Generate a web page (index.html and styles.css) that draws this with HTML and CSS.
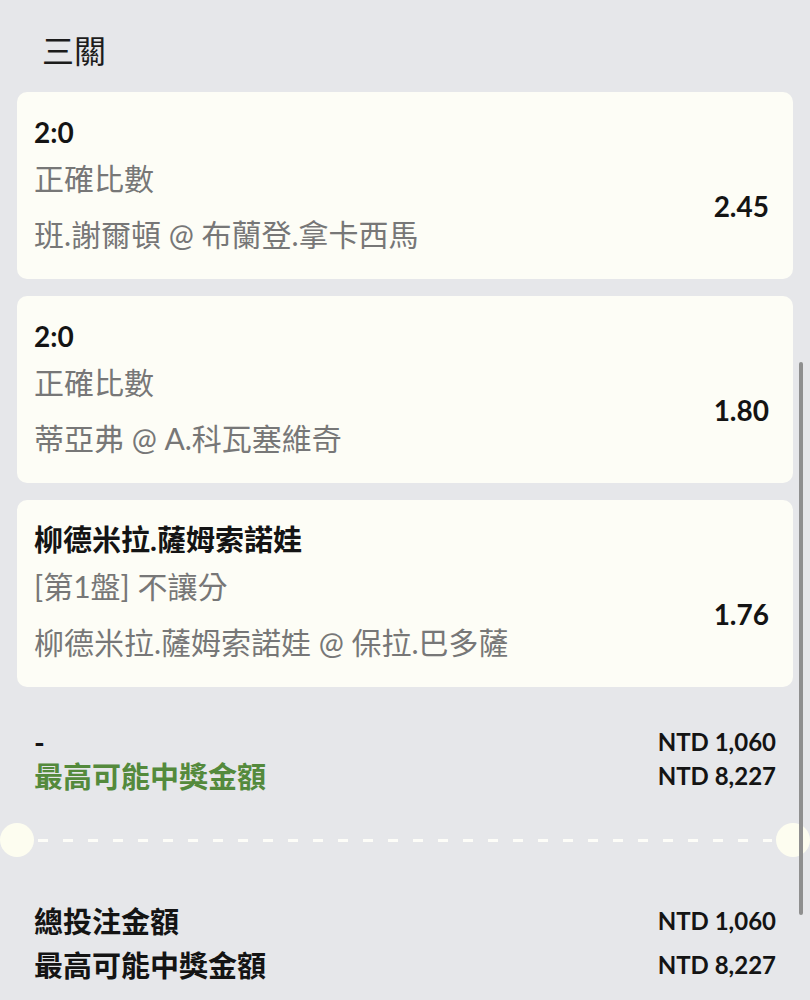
FILE: index.html
```html
<!DOCTYPE html>
<html lang="zh-Hant">
<head>
    <meta charset="UTF-8">
    <meta name="viewport" content="width=device-width, initial-scale=1.0">
    <title>三關</title>
    <link rel="stylesheet" href="styles.css">
</head>
<body>
    <div class="slip">
        <h2 class="slip-title">三關</h2>

        <div class="legs">
            <div class="leg">
                <div class="leg-pick">2:0</div>
                <div class="leg-body">
                    <div class="leg-info">
                        <div class="leg-market">正確比數</div>
                        <div class="leg-event">班.謝爾頓 @ 布蘭登.拿卡西馬</div>
                    </div>
                    <div class="leg-odds">2.45</div>
                </div>
            </div>
            <div class="leg">
                <div class="leg-pick">2:0</div>
                <div class="leg-body">
                    <div class="leg-info">
                        <div class="leg-market">正確比數</div>
                        <div class="leg-event">蒂亞弗 @ A.科瓦塞維奇</div>
                    </div>
                    <div class="leg-odds">1.80</div>
                </div>
            </div>
            <div class="leg">
                <div class="leg-pick name">柳德米拉.薩姆索諾娃</div>
                <div class="leg-body">
                    <div class="leg-info">
                        <div class="leg-market">[第1盤] 不讓分</div>
                        <div class="leg-event">柳德米拉.薩姆索諾娃 @ 保拉.巴多薩</div>
                    </div>
                    <div class="leg-odds">1.76</div>
                </div>
            </div>
        </div>

        <div class="summary">
            <div class="summary-row">
                <span class="summary-label">-</span>
                <span class="amount">NTD 1,060</span>
            </div>
            <div class="summary-row">
                <span class="summary-label green">最高可能中獎金額</span>
                <span class="amount">NTD 8,227</span>
            </div>
        </div>

        <div class="divider">
            <span class="notch"></span>
            <span class="dash-line"></span>
            <span class="notch"></span>
        </div>

        <div class="totals">
            <div class="total-row">
                <span>總投注金額</span>
                <span class="amount">NTD 1,060</span>
            </div>
            <div class="total-row">
                <span>最高可能中獎金額</span>
                <span class="amount">NTD 8,227</span>
            </div>
        </div>
    </div>

    <div class="scrollbar"></div>
</body>
</html>
```

FILE: styles.css
```css
* {
    box-sizing: border-box;
    margin: 0;
    padding: 0;
}

body {
    font-family: Lato, "Noto Sans CJK TC", sans-serif;
    background: #e6e7ea;
    color: #141414;
    height: 1000px;
    overflow: hidden;
    position: relative;
}

.slip {
    padding-top: 28px;
}

.slip-title {
    font-size: 32px;
    font-weight: 400;
    line-height: 46px;
    padding-left: 42px;
    margin-bottom: 18px;
    color: #1c1c1c;
}

.legs {
    display: flex;
    flex-direction: column;
    gap: 17px;
    padding: 0 17px;
}

.leg {
    background: #fdfdf6;
    border-radius: 10px;
    padding: 17px 24px 22px 17px;
}

.leg-pick {
    font-size: 28px;
    font-weight: 700;
    line-height: 46px;
}

.leg-pick.name {
    font-size: 29px;
}

.leg-body {
    display: flex;
    align-items: center;
    justify-content: space-between;
}

.leg-market,
.leg-event {
    font-size: 30px;
    line-height: 46px;
    color: #777;
}

.leg-event {
    margin-top: 10px;
}

.leg-odds {
    font-size: 28px;
    font-weight: 700;
}

.summary {
    padding: 37px 34px 0;
}

.summary-row,
.total-row {
    display: flex;
    justify-content: space-between;
    align-items: center;
    font-weight: 700;
}

.summary-row {
    height: 34px;
}

.summary-label {
    font-size: 29px;
}

.green {
    color: #548a3c;
}

.amount {
    font-size: 24px;
    font-weight: 700;
}

.divider {
    display: flex;
    align-items: center;
    height: 34px;
    margin-top: 31px;
}

.notch {
    width: 34px;
    height: 34px;
    border-radius: 50%;
    background: #fdfdf0;
    flex-shrink: 0;
}

.dash-line {
    flex: 1;
    height: 3px;
    margin: 0 4px;
    background: repeating-linear-gradient(90deg, #fdfdf8 0 10px, transparent 10px 25px);
}

.totals {
    padding: 41px 34px 0;
}

.total-row {
    height: 44px;
    font-size: 29px;
}

.total-row .amount {
    font-size: 24px;
}

.scrollbar {
    position: absolute;
    right: 7px;
    top: 362px;
    width: 4px;
    height: 553px;
    border-radius: 2px;
    background: #8f8f8f;
}
```
